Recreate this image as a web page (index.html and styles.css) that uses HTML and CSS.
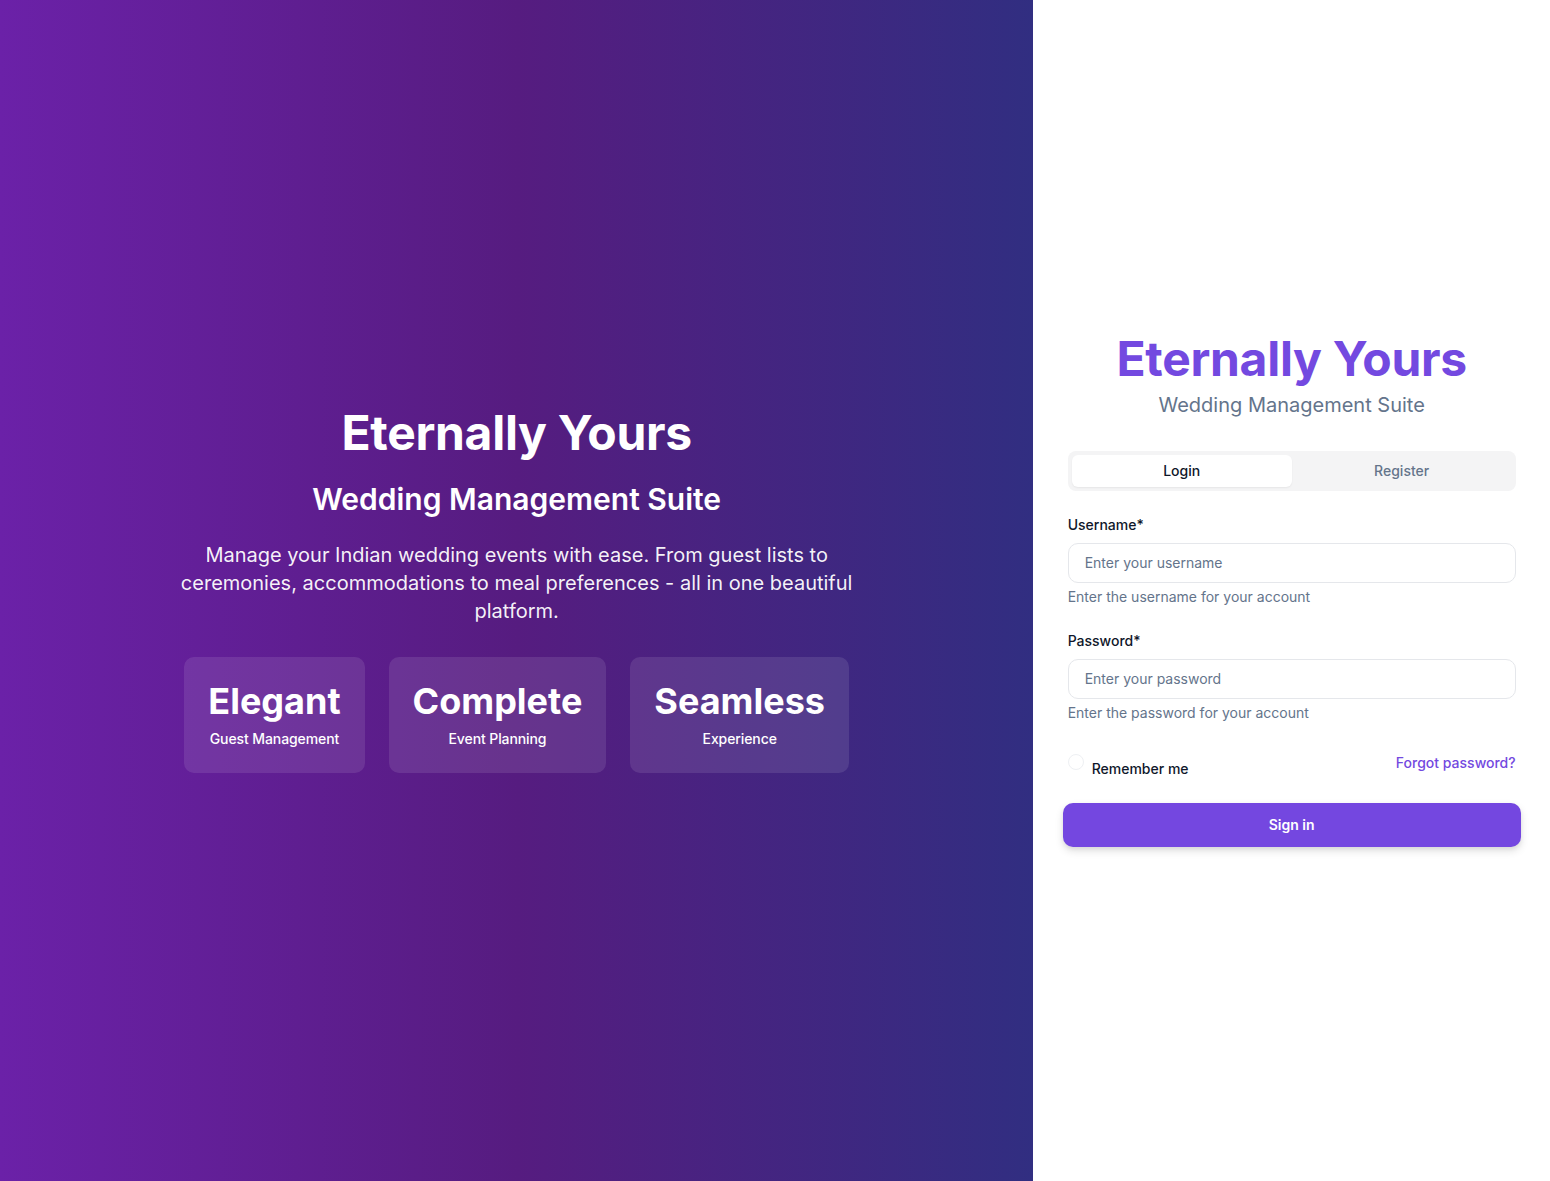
FILE: index.html
```html
<!DOCTYPE html>
<html lang="en">
<head>
<meta charset="utf-8">
<title>Eternally Yours</title>
<link rel="stylesheet" href="styles.css">
</head>
<body>
<div class="page">
  <section class="hero">
    <div class="hero-inner">
      <h1 class="hero-title">Eternally Yours</h1>
      <h2 class="hero-sub">Wedding Management Suite</h2>
      <p class="hero-text">Manage your Indian wedding events with ease. From guest lists to ceremonies, accommodations to meal preferences - all in one beautiful platform.</p>
      <div class="cards">
        <div class="card"><div class="card-title">Elegant</div><div class="card-sub">Guest Management</div></div>
        <div class="card"><div class="card-title">Complete</div><div class="card-sub">Event Planning</div></div>
        <div class="card"><div class="card-title">Seamless</div><div class="card-sub">Experience</div></div>
      </div>
    </div>
  </section>
  <section class="side">
    <div class="form-wrap">
      <div class="brand">
        <h1 class="brand-title">Eternally Yours</h1>
        <p class="brand-sub">Wedding Management Suite</p>
      </div>
      <div class="tabs">
        <button class="tab active" type="button">Login</button>
        <button class="tab" type="button">Register</button>
      </div>
      <form class="form">
        <div class="field">
          <label class="label" for="u">Username*</label>
          <input class="input" id="u" type="text" placeholder="Enter your username">
          <p class="help">Enter the username for your account</p>
        </div>
        <div class="field">
          <label class="label" for="p">Password*</label>
          <input class="input" id="p" type="password" placeholder="Enter your password">
          <p class="help">Enter the password for your account</p>
        </div>
        <div class="row">
          <label class="remember"><span class="check"></span><span class="remember-text">Remember me</span></label>
          <a class="forgot" href="#">Forgot password?</a>
        </div>
        <button class="submit" type="button">Sign in</button>
      </form>
    </div>
  </section>
</div>
</body>
</html>
```

FILE: styles.css
```css
* { box-sizing: border-box; }
html, body { margin: 0; padding: 0; }
body {
  font-family: Inter, "Noto Sans", "Liberation Sans", sans-serif;
  color: #0f172a;
  background: #fff;
}
.page {
  display: flex;
  min-height: 1181px;
  height: 100vh;
}
.hero {
  flex: 0 0 66.6667%;
  background: linear-gradient(to right, #6b21a8 0%, #561c80 50%, #312e81 100%);
  display: flex;
  align-items: center;
  justify-content: center;
  color: #fff;
  padding: 0 48px;
}
.hero-inner {
  max-width: 672px;
  text-align: center;
  display: flex;
  flex-direction: column;
  align-items: center;
}
.hero-title {
  margin: 0 0 24px;
  font-size: 48px;
  line-height: 48px;
  font-weight: 700;
  letter-spacing: -0.3px;
}
.hero-sub {
  margin: 0 0 24px;
  font-size: 30px;
  line-height: 36px;
  font-weight: 600;
}
.hero-text {
  margin: 0 0 32px;
  font-size: 20px;
  line-height: 28px;
  font-weight: 400;
  color: rgba(255,255,255,0.95);
}
.cards {
  display: flex;
  gap: 24px;
  justify-content: center;
}
.card {
  background: rgba(255,255,255,0.1);
  border-radius: 10px;
  padding: 24px;
  display: flex;
  flex-direction: column;
  align-items: center;
  gap: 8px;
}
.card-title {
  font-size: 36px;
  line-height: 40px;
  font-weight: 700;
}
.card-sub {
  font-size: 14px;
  line-height: 20px;
  font-weight: 500;
  letter-spacing: -0.1px;
}
.side {
  flex: 1 1 auto;
  display: flex;
  align-items: center;
  justify-content: center;
  background: #fff;
  padding: 0 34px 2px;
}
.form-wrap {
  width: 448px;
}
.brand {
  text-align: center;
  margin-bottom: 32px;
}
.brand-title {
  margin: 0;
  font-size: 48px;
  line-height: 52px;
  font-weight: 700;
  color: #7349e0;
  letter-spacing: -0.3px;
}
.brand-sub {
  margin: 6px 0 0;
  font-size: 20px;
  line-height: 28px;
  color: #64748b;
}
.tabs {
  display: grid;
  grid-template-columns: 1fr 1fr;
  background: #f4f4f5;
  border-radius: 8px;
  padding: 4px;
  height: 40px;
  margin-bottom: 24px;
}
.tab {
  font-family: inherit;
  border: 0;
  background: transparent;
  font-size: 14px;
  font-weight: 500;
  color: #64748b;
  border-radius: 6px;
  padding: 0;
}
.tab.active {
  background: #fff;
  color: #0f172a;
  box-shadow: 0 1px 2px rgba(0,0,0,0.06);
}
.form {
  display: flex;
  flex-direction: column;
}
.field {
  display: flex;
  flex-direction: column;
  margin-bottom: 24px;
}
.label {
  font-size: 14px;
  line-height: 20px;
  font-weight: 500;
  color: #0f172a;
  margin-bottom: 8px;
}
.input {
  font-family: inherit;
  height: 40px;
  border: 1px solid #e5e7eb;
  border-radius: 10px;
  padding: 0 16px;
  font-size: 14px;
  color: #0f172a;
  background: #fff;
  outline: none;
}
.input::placeholder { color: #64748b; }
.help {
  margin: 4px 0 0;
  font-size: 14px;
  line-height: 20px;
  color: #64748b;
}
.row {
  display: flex;
  justify-content: space-between;
  align-items: flex-start;
  margin: 8px 0 24px;
}
.remember {
  display: flex;
  align-items: flex-start;
  gap: 8px;
}
.check {
  width: 16px;
  height: 16px;
  border: 1px solid #eef0f3;
  border-radius: 50%;
  background: #fff;
  margin-top: -1px;
}
.remember-text {
  font-size: 14px;
  line-height: 20px;
  font-weight: 500;
  color: #0f172a;
  padding-top: 4px;
}
.forgot {
  font-size: 14px;
  line-height: 20px;
  font-weight: 500;
  color: #7349e0;
  text-decoration: none;
  margin-top: -2px;
}
.submit {
  font-family: inherit;
  height: 44px;
  margin: 0 -5px;
  border: 0;
  border-radius: 10px;
  background: #7447e0;
  color: #fff;
  font-size: 14px;
  font-weight: 600;
  box-shadow: 0 4px 8px rgba(0,0,0,0.12), 0 2px 4px rgba(0,0,0,0.06);
}
```
